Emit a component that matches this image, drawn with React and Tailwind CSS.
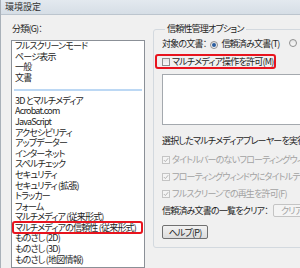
import React from "react";

const font = "font-['Noto_Sans_CJK_JP','Noto_Sans_CJK_SC',sans-serif] [font-feature-settings:'palt'] tracking-[-0.8px]";

function Check({ disabled, checked }) {
  return (
    <span
      className={`inline-flex shrink-0 items-center justify-center w-[8px] h-[8px] border ${
        disabled ? "border-[#c4c4c4] bg-[#f4f4f4]" : "border-[#8e8f8f] bg-gradient-to-b from-[#e6e6e6] to-[#f8f8f8]"
      }`}
    >
      {checked && (
        <svg width="6" height="6" viewBox="0 0 6 6">
          <path d="M0.8 3 L2.4 4.6 L5.2 1.2" fill="none" stroke={disabled ? "#b4b4b4" : "#333"} strokeWidth="1" />
        </svg>
      )}
    </span>
  );
}

function Radio({ on }) {
  return (
    <span className="inline-flex shrink-0 items-center justify-center w-[8px] h-[8px] rounded-full border border-[#8e8f8f] bg-gradient-to-b from-[#e4e4e4] to-[#fafafa]">
      {on && <span className="w-[4px] h-[4px] rounded-full bg-[#2a5d9e]" />}
    </span>
  );
}

const topItems = ["フルスクリーンモード", "ページ表示", "一般", "文書"];
const items = [
  "3D とマルチメディア",
  "Acrobat.com",
  "JavaScript",
  "アクセシビリティ",
  "アップデーター",
  "インターネット",
  "スペルチェック",
  "セキュリティ",
  "セキュリティ (拡張)",
  "トラッカー",
  "フォーム",
  "マルチメディア (従来形式)",
  "マルチメディアの信頼性 (従来形式)",
  "ものさし (2D)",
  "ものさし (3D)",
  "ものさし (地図情報)",
];

export default function App() {
  return (
    <div className={`w-[300px] h-[268px] overflow-hidden bg-[#f0f0f0] border-l border-[#a9b1b9] text-[9px] text-[#1e1e1e] ${font} flex flex-col`}>
      <div className="h-[15px] shrink-0 bg-gradient-to-b from-[#e3e9ef] to-[#d6dee6] border-b border-[#bcc5ce] flex items-center pl-[4px] text-[#333] tracking-normal">
        環境設定
      </div>
      <div className="flex flex-1 min-h-0">
        {/* left column */}
        <div className="w-[145px] shrink-0 pl-[10px] flex flex-col">
          <div className="h-[25px] pt-[9px] pl-[1px] leading-[10px]">分類(G)：</div>
          <div className="w-[134px] flex-1 bg-white border border-[#8b9097] pl-[3px] pr-[2px] leading-[10.6px] whitespace-nowrap overflow-hidden">
            {topItems.map((t) => (
              <div key={t} className="h-[10.7px]">{t}</div>
            ))}
            <div className="h-[12px] flex items-center -ml-[1px]">
              <div className="w-full h-[2px] bg-[#bcd8f4]" />
            </div>
            {items.map((t) =>
              t === "マルチメディアの信頼性 (従来形式)" ? (
                <div key={t} className="h-[10.6px] -ml-[3px] -mr-[1px] relative">
                  <div className="absolute left-0 right-0 -top-[1.5px] h-[13px] border-2 border-[#e8141e] rounded-[3px]" />
                  <div className="pl-[3px]">{t}</div>
                </div>
              ) : (
                <div key={t} className="h-[10.6px]">{t}</div>
              )
            )}
          </div>
        </div>
        {/* right column */}
        <div className="flex-1 pl-[7px] pt-[9px] min-w-0">
          <fieldset className="w-[200px] h-[224px] border border-[#d3d9df] rounded-[3px] pl-[8px] pr-0 pt-[2px]">
            <legend className="ml-[3px] px-[2px] leading-[10px]">信頼性管理オプション</legend>
            <div className="flex items-center h-[12px] mt-[2px] whitespace-nowrap">
              <span>対象の文書：</span>
              <span className="ml-[4px]"><Radio on /></span>
              <span className="ml-[3px]">信頼済み文書(T)</span>
              <span className="ml-[10px]"><Radio /></span>
              <span className="ml-[3px]">その他の文書</span>
            </div>
            <div className="mt-[4px] -ml-[7px] w-[121px] h-[15px] border-2 border-[#e8141e] rounded-[3px] flex items-center pl-[5px] whitespace-nowrap">
              <Check />
              <span className="ml-[2px]">マルチメディア操作を許可(M)</span>
            </div>
            <div className="mt-[5px] h-[51px] bg-white border border-[#a4a9ae]" />
            <div className="mt-[10px] h-[12px] leading-[12px] whitespace-nowrap">選択したマルチメディアプレーヤーを実行する場合：</div>
            <div className="text-[#a2a2a2]">
              <div className="mt-[7px] h-[12px] flex items-center whitespace-nowrap">
                <Check disabled checked />
                <span className="ml-[2px]">タイトルバーのないフローティングウィンドウを許可</span>
              </div>
              <div className="mt-[5px] h-[12px] flex items-center whitespace-nowrap">
                <Check disabled checked />
                <span className="ml-[2px]">フローティングウィンドウにタイトルテキストを表示</span>
              </div>
              <div className="mt-[5px] h-[12px] flex items-center whitespace-nowrap">
                <Check disabled checked />
                <span className="ml-[2px]">フルスクリーンでの再生を許可(F)</span>
              </div>
            </div>
            <div className="mt-[4px] flex items-center h-[13px] whitespace-nowrap">
              <span>信頼済み文書の一覧をクリア：</span>
              <span className="ml-[5px] h-[13px] w-[50px] border border-[#c4c4c4] bg-[#f4f4f4] rounded-[2px] text-[#a2a2a2] flex items-center pl-[7px]">クリア(C)</span>
            </div>
            <button className="mt-[8px] w-[46px] h-[14px] border border-[#707070] rounded-[2px] bg-gradient-to-b from-[#f2f2f2] to-[#dcdcdc] flex items-center justify-center leading-none">
              ヘルプ(P)
            </button>
          </fieldset>
        </div>
      </div>
    </div>
  );
}
